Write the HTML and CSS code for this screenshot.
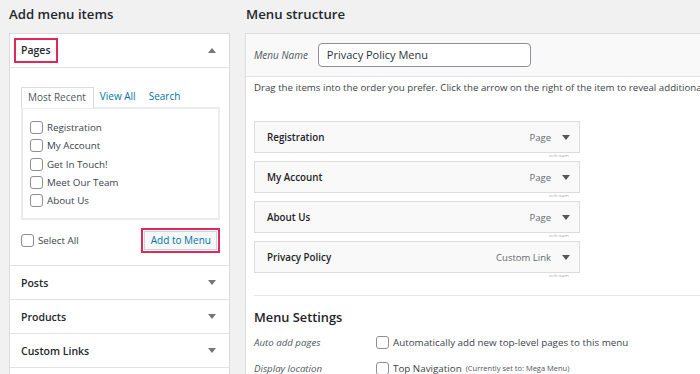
FILE: index.html
```html
<!DOCTYPE html>
<html>
<head>
<meta charset="utf-8">
<link rel="stylesheet" href="styles.css">
</head>
<body>
<div class="page">
  <section class="col-left">
    <h2 class="col-title">Add menu items</h2>
    <div class="accordion">
      <div class="acc-section open">
        <div class="acc-head">
          <span class="hl-box">Pages</span>
          <span class="tri up"></span>
        </div>
        <div class="acc-body">
          <div class="tabs">
            <span class="tab active">Most Recent</span>
            <span class="tab">View All</span>
            <span class="tab">Search</span>
          </div>
          <div class="tab-panel">
            <label class="check-row"><span class="cb"></span>Registration</label>
            <label class="check-row"><span class="cb"></span>My Account</label>
            <label class="check-row"><span class="cb"></span>Get In Touch!</label>
            <label class="check-row"><span class="cb"></span>Meet Our Team</label>
            <label class="check-row"><span class="cb"></span>About Us</label>
          </div>
          <div class="actions">
            <label class="check-row"><span class="cb"></span>Select All</label>
            <span class="btn-hl"><span class="btn">Add to Menu</span></span>
          </div>
        </div>
      </div>
      <div class="acc-section"><div class="acc-head"><span class="acc-label">Posts</span><span class="tri"></span></div></div>
      <div class="acc-section"><div class="acc-head"><span class="acc-label">Products</span><span class="tri"></span></div></div>
      <div class="acc-section"><div class="acc-head"><span class="acc-label">Custom Links</span><span class="tri"></span></div></div>
      <div class="acc-section"><div class="acc-head"><span class="acc-label">Categories</span><span class="tri"></span></div></div>
    </div>
  </section>

  <section class="col-right">
    <h2 class="col-title">Menu structure</h2>
    <div class="menu-panel">
      <div class="menu-head">
        <span class="field-label">Menu Name</span>
        <span class="name-input">Privacy Policy Menu</span>
      </div>
      <div class="menu-body">
        <p class="hint">Drag the items into the order you prefer. Click the arrow on the right of the item to reveal additional configuration options.</p>
        <ul class="items">
          <li class="item"><span class="item-title">Registration</span><span class="item-type">Page</span><span class="tri dark"></span><span class="item-sub">sub item</span></li>
          <li class="item"><span class="item-title">My Account</span><span class="item-type">Page</span><span class="tri dark"></span><span class="item-sub">sub item</span></li>
          <li class="item"><span class="item-title">About Us</span><span class="item-type">Page</span><span class="tri dark"></span><span class="item-sub">sub item</span></li>
          <li class="item"><span class="item-title">Privacy Policy</span><span class="item-type">Custom Link</span><span class="tri dark"></span><span class="item-sub">sub item</span></li>
        </ul>
        <div class="settings">
          <h3 class="settings-title">Menu Settings</h3>
          <div class="set-row">
            <span class="set-label">Auto add pages</span>
            <label class="check-row"><span class="cb"></span>Automatically add new top-level pages to this menu</label>
          </div>
          <div class="set-row">
            <span class="set-label">Display location</span>
            <label class="check-row"><span class="cb"></span>Top Navigation <small class="note">(Currently set to: Mega Menu)</small></label>
          </div>
        </div>
      </div>
    </div>
  </section>
</div>
</body>
</html>
```

FILE: styles.css
```css
* { box-sizing: border-box; }
html, body { margin: 0; padding: 0; }
body {
  background: #f1f1f1;
  font-family: "Open Sans", "Noto Sans", sans-serif;
  color: #32373c;
  width: 700px;
  height: 374px;
  overflow: hidden;
}
.page {
  display: flex;
  align-items: flex-start;
  padding-left: 9px;
  gap: 15px;
}
.col-left { width: 221px; flex: none; }
.col-right { flex: 1; min-width: 0; }
.col-title {
  margin: 0;
  height: 33px;
  padding-top: 4px;
  font-size: 13.2px;
  font-weight: 600;
  color: #23282d;
  line-height: 20px;
}
.col-right .col-title { padding-left: 1px; }

/* accordion */
.accordion {
  border: 1px solid #dcdcde;
  border-bottom: none;
  background: #fff;
}
.acc-section { border-bottom: 1px solid #e3e3e3; }
.acc-head {
  height: 33px;
  display: flex;
  align-items: center;
  justify-content: space-between;
  padding: 0 13px 0 11px;
  font-size: 10.5px;
  font-weight: 600;
  color: #23282d;
}
.open .acc-head {
  height: 34px;
  padding-left: 4px;
  border-bottom: 1px solid #e3e3e3;
}
.hl-box {
  display: inline-block;
  height: 25px;
  line-height: 21px;
  padding: 0 5px;
  border: 2px solid #e2275a;
}
.tri {
  width: 0; height: 0;
  border-left: 4px solid transparent;
  border-right: 4px solid transparent;
  border-top: 5px solid #72777c;
}
.tri.up { border-top: none; border-bottom: 5px solid #72777c; }
.tri.dark { border-top-color: #50575e; }

.acc-body { padding: 19px 9px 12px 11px; }
.tabs { display: flex; align-items: flex-end; font-size: 10px; }
.tab {
  height: 20px;
  line-height: 19px;
  padding: 0 7px 0 6px;
  color: #0073aa;
}
.tab.active {
  color: #50575e;
  border: 1px solid #dcdcde;
  border-bottom: none;
  background: #fff;
  position: relative;
  z-index: 1;
  margin-bottom: -1px;
  height: 21px;
}
.tab-panel {
  border: 2px solid #ececec;
  height: 113px;
  padding: 12px 0 0 7px;
  display: flex;
  flex-direction: column;
  gap: 5.25px;
}
.check-row {
  display: flex;
  align-items: center;
  gap: 4px;
  font-size: 9.8px;
  color: #3c434a;
  height: 13px;
  white-space: nowrap;
}
.cb {
  width: 13px; height: 13px;
  border: 1px solid #8c8f94;
  border-radius: 3px;
  background: #fff;
  flex: none;
}
.actions {
  display: flex;
  justify-content: space-between;
  align-items: center;
  margin-top: 7px;
  height: 26px;
}
.btn-hl {
  border: 2px solid #e2275a;
  padding: 1px;
  display: inline-flex;
}
.btn {
  display: inline-block;
  height: 19px;
  line-height: 17px;
  padding: 0 5px 0 6px;
  border: 1px solid #c9d6df;
  background: #f6f7f7;
  color: #0073aa;
  font-size: 10px;
}

/* right */
.menu-panel {
  border: 1px solid #dcdcde;
  border-right: none;
  background: #fff;
  height: 400px;
}
.menu-head {
  height: 43px;
  background: #f9f9f9;
  border-bottom: 1px solid #e3e3e3;
  display: flex;
  align-items: center;
  padding-left: 8px;
  gap: 10px;
}
.field-label {
  font-style: italic;
  font-size: 10px;
  color: #50575e;
}
.name-input {
  width: 213px;
  height: 24px;
  border: 1px solid #8c8f94;
  border-radius: 4px;
  background: #fff;
  font-size: 11px;
  line-height: 22px;
  padding-left: 8px;
  color: #2c3338;
}
.menu-body { padding: 3px 0 0 8px; }
.hint {
  margin: 0;
  font-size: 9.7px;
  color: #3c434a;
  white-space: nowrap;
  line-height: 16px;
}
.items {
  list-style: none;
  margin: 25px 0 0 0;
  padding: 0;
  width: 326px;
  display: flex;
  flex-direction: column;
  gap: 8px;
}
.item {
  position: relative;
  height: 32px;
  border: 1px solid #dcdcde;
  background: #f9f9f9;
  display: flex;
  align-items: center;
  padding: 0 9px 0 12px;
  font-size: 9.8px;
}
.item-title { font-weight: 600; color: #1d2327; flex: 1; }
.item-type { color: #646970; font-size: 9.5px; margin-right: 11px; }
.item-sub {
  position: absolute;
  right: 10px;
  bottom: -5px;
  font-size: 5px;
  color: #b0b0b0;
  height: 4px;
  overflow: hidden;
}
.settings {
  margin-top: 22px;
  border-top: 1px solid #e8e8e8;
}
.settings-title {
  margin: 0;
  padding-top: 12px;
  height: 33px;
  font-size: 12.8px;
  line-height: 18px;
  font-weight: 600;
  color: #1d2327;
}
.set-row {
  display: flex;
  align-items: center;
  height: 26px;
}
.set-label {
  width: 122px;
  font-style: italic;
  font-size: 9.7px;
  color: #50575e;
}
.set-row .check-row { font-size: 9.8px; gap: 4px; }
.note { font-size: 7.5px; color: #50575e; }
```
